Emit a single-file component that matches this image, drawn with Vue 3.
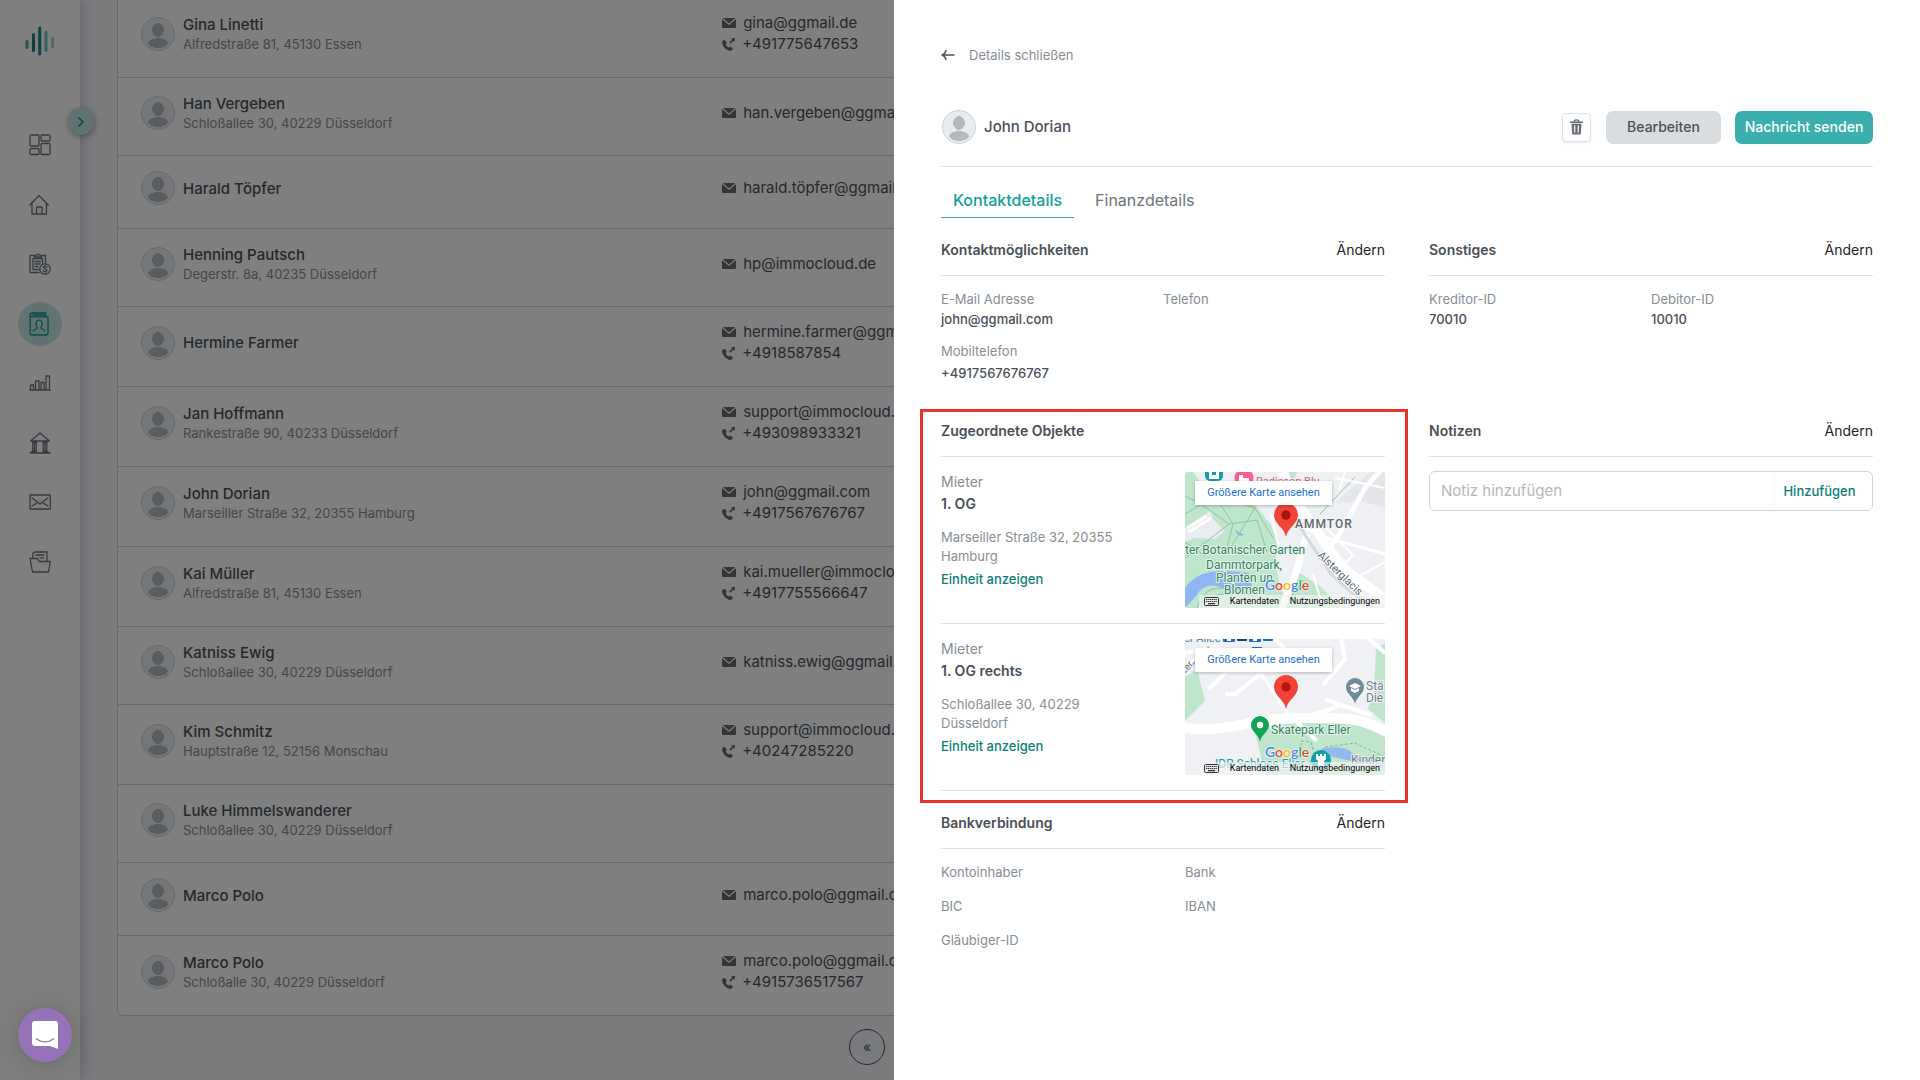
<script setup>
const contacts = [
  { name: 'Gina Linetti', address: 'Alfredstraße 81, 45130 Essen', mail: 'gina@ggmail.de', phone: '+491775647653' },
  { name: 'Han Vergeben', address: 'Schloßallee 30, 40229 Düsseldorf', mail: 'han.vergeben@ggmail.de' },
  { name: 'Harald Töpfer', mail: 'harald.töpfer@ggmail.de' },
  { name: 'Henning Pautsch', address: 'Degerstr. 8a, 40235 Düsseldorf', mail: 'hp@immocloud.de' },
  { name: 'Hermine Farmer', mail: 'hermine.farmer@ggmail.de', phone: '+4918587854' },
  { name: 'Jan Hoffmann', address: 'Rankestraße 90, 40233 Düsseldorf', mail: 'support@immocloud.de', phone: '+493098933321' },
  { name: 'John Dorian', address: 'Marseiller Straße 32, 20355 Hamburg', mail: 'john@ggmail.com', phone: '+4917567676767' },
  { name: 'Kai Müller', address: 'Alfredstraße 81, 45130 Essen', mail: 'kai.mueller@immocloud.de', phone: '+4917755566647' },
  { name: 'Katniss Ewig', address: 'Schloßallee 30, 40229 Düsseldorf', mail: 'katniss.ewig@ggmail.de' },
  { name: 'Kim Schmitz', address: 'Hauptstraße 12, 52156 Monschau', mail: 'support@immocloud.de', phone: '+40247285220' },
  { name: 'Luke Himmelswanderer', address: 'Schloßallee 30, 40229 Düsseldorf' },
  { name: 'Marco Polo', mail: 'marco.polo@ggmail.com' },
  { name: 'Marco Polo', address: 'Schloßalle 30, 40229 Düsseldorf', mail: 'marco.polo@ggmail.de', phone: '+4915736517567' },
]

const navItems = ['dashboard', 'home', 'billing', 'contacts', 'chart', 'bank', 'mail', 'folder']

const objects = [
  { role: 'Mieter', unit: '1. OG', address: 'Marseiller Straße 32, 20355 Hamburg', map: 'hamburg' },
  { role: 'Mieter', unit: '1. OG rechts', address: 'Schloßallee 30, 40229 Düsseldorf', map: 'duesseldorf' },
]
</script>

<template>
  <div class="app">
    <aside class="sidebar">
      <svg class="logo" width="30" height="30" viewBox="0 0 30 30" fill="none" stroke-width="3" stroke-linecap="round">
        <path d="M2 15.500v6" stroke="#46aaa6" />
        <path d="M8.500 8.500v16" stroke="#237f7b" />
        <path d="M14.700 2v26" stroke="#1c8883" />
        <path d="M21 6v18.500" stroke="#7cc4c1" />
        <path d="M27.700 12.500v8" stroke="#90d0cd" />
      </svg>
      <nav class="nav" aria-label="Navigation">
        <a v-for="item in navItems" :key="item" href="#" class="nav-link" :class="{ active: item === 'contacts' }" :aria-label="item">
          <svg width="22" height="24" viewBox="0 0 22 24" fill="none" stroke="currentColor" stroke-width="1.300" stroke-linejoin="round" stroke-linecap="round">
            <g v-if="item === 'dashboard'">
              <rect x="1" y="2" width="9" height="11" rx="1" /><rect x="12" y="2" width="9" height="6" rx="1" />
              <rect x="1" y="15.500" width="9" height="6" rx="1" /><rect x="12" y="10.500" width="9" height="11" rx="1" />
            </g>
            <g v-else-if="item === 'home'">
              <path d="M.8 12 10 2.500l9.300 9.500M3 10v11h14.500V10M7.500 21v-7h5.500v7" />
            </g>
            <g v-else-if="item === 'billing'">
              <path d="M10 20.500H1V3.500h4.500M12 3.500h4.500v8M5.500 5V3.500h1.700a2 2 0 0 1 3.600 0h1.700V5z" />
              <path d="M10 17.500H4V6.500h9.500v5M6 9.500h5.500M6 12h5M6 14.500h3" />
              <circle cx="16" cy="17" r="5.200" />
              <path d="M18 15.200c-.6-1.200-3.600-1.200-3.600.3 0 1.600 3.500 1.200 3.500 2.900 0 1.500-3 1.500-3.700.2M16.200 13.500v1M16.200 19.700v1" />
            </g>
            <g v-else-if="item === 'contacts'">
              <path d="M1.200 3.500A2.300 2.300 0 0 1 3.500 1h13v3M1.200 3.500V21A2 2 0 0 0 3.200 23H17a2 2 0 0 0 2-2V4.800H3.500A2 2 0 0 1 1.200 3M4 3h12" />
              <path d="M4.500 19c.5-2 3-1.500 3.700-2.800.3-1-.9-1.500-1.200-4 0-5.500 6.200-5.500 6.200 0-.2 2.500-1.500 3-1.200 4 .7 1.300 3.200.8 3.700 2.800" />
            </g>
            <g v-else-if="item === 'chart'">
              <path d="M.8 19h20.500M1.500 19v-5h3v5M6.500 19v-9h3.500v9M12 19v-7.500h3V19M17 19V5h3.500v14" />
            </g>
            <g v-else-if="item === 'bank'">
              <path d="M1.500 10 11 2l9.500 8zM.8 22h20.500M2.500 20.500h5M14 20.500h5M3.500 11.500h4M14 11.500h4M3.800 11.500v9M5.500 11.500v9M7.200 11.500v9M14.300 11.500v9M16 11.500v9M17.800 11.500v9" />
            </g>
            <g v-else-if="item === 'mail'">
              <rect x="1" y="5" width="20.300" height="14" />
              <path d="m3 8 8 6 8-6M3 16l4.500-2.800M19 16l-4.500-2.800" />
            </g>
            <g v-else>
              <path d="M1 8.500h7.500l1.500 3h11.200L19.500 22h-16zM3.800 8.500V3.500L5.500 2H18v9.500M7 5h8M11 7.800h4" />
            </g>
          </svg>
        </a>
      </nav>
      <button class="expand" type="button" aria-label="Menü ausklappen">
        <svg width="8" height="12" viewBox="0 0 8 12" fill="none" stroke="currentColor" stroke-width="1.600" stroke-linecap="round" stroke-linejoin="round"><path d="m2 2 4 4-4 4" /></svg>
      </button>
    </aside>

    <main class="main">
      <div class="card">
        <table class="contacts">
          <colgroup><col class="col-name" /><col /></colgroup>
          <tbody>
            <tr v-for="(c, i) in contacts" :key="i">
              <td>
                <div class="person">
                  <span class="avatar"></span>
                  <div>
                    <div class="name">{{ c.name }}</div>
                    <div v-if="c.address" class="address">{{ c.address }}</div>
                  </div>
                </div>
              </td>
              <td>
                <div v-if="c.mail" class="contact-line">
                  <svg width="14" height="10" viewBox="0 0 14 10" fill="currentColor"><path d="M.8 0h12.400L7 5.600zM0 .9 7 7.100l7-6.200V9a1 1 0 0 1-1 1H1a1 1 0 0 1-1-1z" /></svg>
                  <span>{{ c.mail }}</span>
                </div>
                <div v-if="c.phone" class="contact-line phone-line">
                  <svg width="13" height="13" viewBox="0 0 13 13" fill="currentColor"><path d="M0 3.200 2.600 1.700 5 4.800 3.700 6.200c.6 1.600 1.700 2.600 3 3.300l1.400-1 2.900 2.100-1.500 2.200C4.500 13.300.2 8.500 0 3.200z" /><path d="M9 .3 13 0l-.3 4-1.300-1.200-3 3-1.200-1.200 3-3z" /></svg>
                  <span>{{ c.phone }}</span>
                </div>
              </td>
            </tr>
          </tbody>
        </table>
      </div>
      <div class="pager"><button type="button" class="page-btn">«</button></div>
    </main>

    <div class="backdrop"></div>

    <section class="drawer">
      <a href="#" class="close">
        <svg width="14" height="12" viewBox="0 0 14 12" fill="none" stroke="#495057" stroke-width="1.400" stroke-linecap="round" stroke-linejoin="round"><path d="M13 6H1M5 1.500C4.500 3.800 3 5.300 1 6c2 .7 3.500 2.200 4 4.500" /></svg>
        <span>Details schließen</span>
      </a>

      <header class="drawer-head">
        <span class="avatar"></span>
        <h1>John Dorian</h1>
        <button type="button" class="trash" aria-label="Löschen">
          <svg width="13" height="16" viewBox="0 0 13 16" fill="#666e76"><path d="M0 2.500h13v1.400H0zM3.500 2.500a3 2.300 0 0 1 6 0h-1.400a1.600 1 0 0 0-3.200 0z" /><path fill-rule="evenodd" d="M1.500 4.800h10l-.7 10.700H2.200zM4 6.500l.3 7.300h1V6.500zm3.700 0v7.300h1L9 6.500z" /></svg>
        </button>
        <button type="button" class="btn btn-grey">Bearbeiten</button>
        <button type="button" class="btn btn-teal">Nachricht senden</button>
      </header>

      <nav class="tabs">
        <a href="#" class="tab active">Kontaktdetails</a>
        <a href="#" class="tab">Finanzdetails</a>
      </nav>

      <div class="sections">
        <section>
          <div class="section-head"><h2>Kontaktmöglichkeiten</h2><button type="button" class="edit">Ändern</button></div>
          <dl class="fields">
            <div><dt>E-Mail Adresse</dt><dd>john@ggmail.com</dd></div>
            <div><dt>Telefon</dt></div>
            <div><dt>Mobiltelefon</dt><dd class="phone-value">+4917567676767</dd></div>
          </dl>
        </section>

        <section>
          <div class="section-head"><h2>Sonstiges</h2><button type="button" class="edit">Ändern</button></div>
          <dl class="fields">
            <div><dt>Kreditor-ID</dt><dd>70010</dd></div>
            <div><dt>Debitor-ID</dt><dd>10010</dd></div>
          </dl>
        </section>

        <section class="highlight">
          <div class="section-head"><h2>Zugeordnete Objekte</h2></div>
          <article v-for="o in objects" :key="o.map" class="object">
            <div class="object-info">
              <div class="role">{{ o.role }}</div>
              <div class="unit">{{ o.unit }}</div>
              <p>{{ o.address }}</p>
              <a href="#">Einheit anzeigen</a>
            </div>
            <div class="map">
              <svg v-if="o.map === 'hamburg'" viewBox="0 0 200 136" preserveAspectRatio="xMidYMid slice">
                <rect width="200" height="136" fill="#eff0f3" />
                <path d="M0 0h8l18 24 44 9 16 20 7 20-3 20 12 43H0zM96 0h16l-3 8H95z" fill="#bfe5cd" />
                <path d="m112 99 24 16 20 21h-56z" fill="#bfe5cd" />
                <path d="m150 31 35-31h15v36l-24-7z" fill="#e4e6ea" />
                <path d="m0 56 25-17 3 8 12 12-10 8-20-1-10 4z" fill="#e9edf0" />
                <path d="M0 116c14-20 36-18 64-15l3 13-22 7c-14-12-28-8-33 2L0 136z" fill="#8fb5f2" />
                <path d="m50 58 4 2 5 3-4 1-3-2z" fill="#8fb5f2" />
                <g fill="none" stroke="#85c79f" stroke-width="1">
                  <path d="m0 42 30-18 40 12 18 30M30 24l18 28-6 24M0 86l44-34 28-4 10 32M0 24l16 8 28 20M12 136c6-20 20-24 40-16l40 10M20 136c8-16 18-16 30-10M70 36 46 75M0 70l20 14" />
                  <path d="M135 42 170 5M104 128l14-20" />
                </g>
                <g fill="none" stroke="#fff">
                  <path d="m98 0 10 26 22 30c14 20 20 32 32 43s28 18 38 30" stroke-width="10" />
                  <path d="M197-3 180 16l-28 50-14 18" stroke-width="5" />
                  <path d="m94 38 16 12 25 14 65 18" stroke-width="3" />
                  <path d="m122 62-12 42-14 34" stroke-width="7" />
                  <path d="m140 55 28 28-20 22M160 0l-6 18M150 6l50 10M128 102l10 34M86 42l8 34M164 110l36-20" stroke-width="2" />
                  <path d="m2 56 20-12M4 60l22-14" stroke-width="3" />
                </g>
                <path d="m104 36 18 30 24 36 22 20 20 14" fill="none" stroke="#d3d7df" stroke-width="3" />
                <rect x="20" y="-8" width="18" height="17" rx="5" fill="#149ea8" /><path d="M24 0h3v3h4V0h3v7H24z" fill="#fff" />
                <circle cx="59" cy="6" r="9.500" fill="#fb5c94" /><path d="M54 3h4v3h6v3H54z" fill="#fff" />
                <g class="map-text" font-size="12" fill="#31825e" stroke="#e6f5ec" stroke-width="2">
                  <text x="71" y="13" font-size="11" fill="#e5528e">Radisson Blu</text>
                  <text x="0" y="82">ter Botanischer Garten</text>
                  <text x="21" y="97">Dammtorpark,</text>
                  <text x="31" y="110">Planten un</text>
                  <text x="39" y="122">Blomen</text>
                  <text x="110" y="56" fill="#60666d" stroke="#f4f5f7" class="district">AMMTOR</text>
                  <text transform="translate(132 84) rotate(44)" font-size="11" fill="#60666d" stroke="#fff">Alsterglacis</text>
                </g>
                <path d="M101 65c-2-10-12-13-12-22a12 12 0 0 1 24 0c0 9-10 12-12 22z" fill="#f04438" /><circle cx="101" cy="43" r="4.700" fill="#a8140f" />
              </svg>
              <svg v-else viewBox="0 0 200 136" preserveAspectRatio="xMidYMid slice">
                <rect width="200" height="136" fill="#eff1f4" />
                <path d="m0 38 12-8 8 32-20 20zM191 10l9-6v80l-17-14 6-18zM70 92l38-8 60-4 32 14v42H80z" fill="#bfe5cd" />
                <g fill="none" stroke="#fff">
                  <path d="M-5 88c20 4 40 3 65-3s40-6 75-6 45 2 70 16" stroke-width="10" />
                  <path d="M76 34 104 76l28 26M24 50l18-18 50 0M40 55h10l28-22M0 14l30-6 40 14M90 0l12 12M156-2l4 22-22 26M182-2l18 16M140 60l16 6 30 10M110 80l30-8 16-6M0 30l20-20" stroke-width="4" />
                </g>
                <path d="m0 34 24-26" fill="none" stroke="#8fb1ee" stroke-width="2" />
                <path d="m122 125 16-16c16-2 26 0 30 6l30 6v8l-36-8-18-4-16 10z" fill="#95b8f0" />
                <path d="M116 112v-10l10 1 6 22M140 108l30-4 30 14" fill="none" stroke="#85b79a" stroke-width="1" stroke-dasharray="3 2" />
                <g fill="#2269c4"><rect x="38" y="-5" width="12" height="8" rx="1" /><rect x="52" y="-5" width="10" height="7" rx="1" fill="#1b3c84" /><rect x="64" y="-5" width="12" height="8" rx="1" /><rect x="78" y="-5" width="10" height="7" rx="1" /><rect x="67" y="8" width="10" height="4" /></g>
                <g fill="#fff"><path d="M42 0h4v2h-4zM68 0h4v2h-4z" /></g>
                <circle cx="136" cy="121" r="10" fill="#149ea8" /><path d="M131 115h2v2h2v-2h2v2h2v-2h2v5l-2 2v5h-6v-5l-2-2z" fill="#fff" />
                <g class="map-text" font-size="12" fill="#31825e" stroke="#e6f5ec" stroke-width="2">
                  <text x="-1" y="3" font-size="11" fill="#5b78b5">er Allee</text>
                  <text x="86" y="95">Skatepark Eller</text>
                  <text x="30" y="129" fill="#2696a5">IDR Schloss Eller</text>
                  <text x="166" y="125" fill="#71808b">Kinder</text>
                  <text x="181" y="51" fill="#6f7e8a" stroke="#f4f5f7">Stä</text>
                  <text x="181" y="63" fill="#6f7e8a" stroke="#f4f5f7">Die</text>
                  <text transform="translate(3 32) rotate(-50)" font-size="10" fill="#666" stroke="#fff">er</text>
                </g>
                <path d="M170 65c-1-7-9-10-9-17a9 9 0 0 1 18 0c0 7-8 10-9 17z" fill="#718a98" /><path d="m164 47 6-3 6 3-6 3zM166 49v3l4 2 4-2v-3l-4 2z" fill="#fff" />
                <path d="M75 103c-1-8-9-10-9-17a9 9 0 0 1 18 0c0 7-8 9-9 17z" fill="#12a455" /><circle cx="75" cy="86" r="3.200" fill="#fff" />
                <path d="M101 70c-2-10-12-13-12-22a12 12 0 0 1 24 0c0 9-10 12-12 22z" fill="#f04438" /><circle cx="101" cy="48" r="4.700" fill="#b9140f" />
              </svg>
              <a href="#" class="map-link">Größere Karte ansehen</a>
              <span class="google"><b class="g-blue">G</b><b class="g-red">o</b><b class="g-yellow">o</b><b class="g-blue">g</b><b class="g-green">l</b><b class="g-red">e</b></span>
              <div class="map-foot">
                <svg width="15" height="9" viewBox="0 0 15 9"><rect x=".5" y=".5" width="14" height="8" rx="1" fill="#e8e8e8" stroke="#333" /><path d="M2 2.500h11M2 4.500h11" stroke="#333" stroke-width="1.200" stroke-dasharray="1.300 .6" /><path d="M4 6.700h7" stroke="#333" stroke-width="1.200" /></svg>
                <span>Kartendaten</span><a href="#">Nutzungsbedingungen</a>
              </div>
            </div>
          </article>
        </section>

        <section>
          <div class="section-head"><h2>Notizen</h2><button type="button" class="edit">Ändern</button></div>
          <form class="note" @submit.prevent>
            <input type="text" placeholder="Notiz hinzufügen" aria-label="Notiz hinzufügen" />
            <button type="submit">Hinzufügen</button>
          </form>
        </section>

        <section>
          <div class="section-head"><h2>Bankverbindung</h2><button type="button" class="edit">Ändern</button></div>
          <dl class="fields bank">
            <div><dt>Kontoinhaber</dt></div>
            <div><dt>Bank</dt></div>
            <div><dt>BIC</dt></div>
            <div><dt>IBAN</dt></div>
            <div><dt>Gläubiger-ID</dt></div>
          </dl>
        </section>
      </div>
    </section>

    <button type="button" class="chat" aria-label="Chat öffnen">
      <svg width="26" height="28" viewBox="0 0 26 28"><path d="M3 0h20a3 3 0 0 1 3 3v25l-8-3H3a3 3 0 0 1-3-3V3a3 3 0 0 1 3-3z" fill="#fff" /><path d="M4.500 18c5 3.800 12 3.800 17 0" fill="none" stroke="#9673b8" stroke-width="1.400" stroke-linecap="round" /></svg>
    </button>
  </div>
</template>

<style>
body {
  margin: 0;
}
</style>

<style scoped>
.app {
  display: flex;
  height: 100vh;
  overflow: hidden;
  position: relative;
  background: #f5f6fb;
  color: #495057;
  font-family: Inter, 'Liberation Sans', sans-serif;
  font-size: 14px;
  line-height: 20px;
}
.app *,
.app *::after {
  box-sizing: border-box;
}
h1,
h2,
p,
dl,
dd {
  margin: 0;
}
a {
  text-decoration: none;
  color: inherit;
}
button {
  font: inherit;
  color: inherit;
  border: 0;
  padding: 0;
  background: none;
  cursor: pointer;
}
svg {
  display: block;
  flex: none;
}

.sidebar {
  position: relative;
  flex: none;
  width: 80px;
  padding-top: 26px;
  display: flex;
  flex-direction: column;
  align-items: center;
  background: #fff;
  box-shadow: 2px 0 12px rgba(40, 60, 80, 0.22);
}
.nav {
  margin-top: 67px;
  height: 461px;
  display: flex;
  flex-direction: column;
  justify-content: space-between;
}
.nav-link {
  width: 44px;
  height: 44px;
  border-radius: 50%;
  display: flex;
  align-items: center;
  justify-content: center;
  color: #6c757d;
}
.nav-link.active {
  background: #c0e4e5;
  color: #0b9a93;
}
.expand {
  position: absolute;
  top: 108px;
  right: -14px;
  width: 27px;
  height: 27px;
  border-radius: 50%;
  display: flex;
  align-items: center;
  justify-content: center;
  background: #c0e4e5;
  color: #0b8f88;
  box-shadow: 1px 2px 6px rgba(0, 0, 0, 0.3);
}

.main {
  flex: 1;
  min-width: 0;
  padding: 0 37px;
}
.card {
  margin-top: -2px;
  background: #fff;
  border: 1px solid #ced4da;
  border-top: 0;
  border-radius: 0 0 6px 6px;
}
.contacts {
  width: 100%;
  table-layout: fixed;
  border-spacing: 0;
}
.col-name {
  width: 34.25%;
}
.contacts td {
  padding: 15px 0 23px;
  border-bottom: 1px solid #ced4da;
}
.contacts tr:last-child td {
  border-bottom: 0;
}
.person {
  display: flex;
  align-items: center;
  gap: 8px;
  padding-left: 23px;
}
.avatar {
  flex: none;
  width: 34px;
  height: 34px;
  border: 1px solid #ced4da;
  border-radius: 50%;
  background:
    radial-gradient(ellipse 6px 7px at 16px 12px, #b5babf 95%, transparent),
    radial-gradient(ellipse 10px 5px at 16px 25px, #b5babf 95%, transparent),
    #e9ecef;
}
.name {
  font-weight: 500;
  font-size: 15px;
  line-height: 21px;
}
.address {
  font-size: 13px;
  line-height: 18px;
  color: #868e96;
}
.contact-line {
  display: flex;
  align-items: center;
  gap: 7px;
  font-size: 15px;
  white-space: nowrap;
}
.contact-line svg {
  color: #666c72;
}
.phone-line {
  margin-top: 1px;
}
.pager {
  width: 302px;
  margin: 13px auto 0;
  display: flex;
}
.page-btn {
  width: 36px;
  height: 36px;
  border: 1px solid #495057;
  border-radius: 50%;
  font-size: 14px;
}

.backdrop {
  position: absolute;
  inset: 0;
  background: rgba(0, 0, 0, 0.5);
}

.drawer {
  position: absolute;
  top: 0;
  right: 0;
  bottom: 0;
  width: 53.4375%;
  padding: 45px 47px 0;
  background: #fff;
}
.close {
  display: flex;
  align-items: center;
  gap: 14px;
  font-size: 13px;
  color: #868e96;
}
.drawer-head {
  display: flex;
  align-items: center;
  margin-top: 45px;
  padding: 0 0 22px 1px;
  border-bottom: 1px solid #dee2e6;
}
.drawer-head h1 {
  flex: 1;
  margin-left: 8px;
  font-size: 15px;
  font-weight: 500;
}
.trash {
  width: 29px;
  height: 29px;
  display: flex;
  align-items: center;
  justify-content: center;
  border: 1px solid #dee2e6;
  border-radius: 4px;
  box-shadow: 0 1px 2px rgba(0, 0, 0, 0.08);
}
.btn {
  height: 33px;
  border-radius: 7px;
  font-weight: 500;
}
.btn-grey {
  width: 115px;
  margin-left: 15px;
  background: #d9dde0;
}
.btn-teal {
  width: 138px;
  margin-left: 14px;
  background: #3aafad;
  color: #fff;
}
.tabs {
  display: flex;
  gap: 9px;
  padding: 16px 0 8px;
}
.tab {
  height: 35px;
  padding: 0 12px;
  font-size: 16px;
  line-height: 34px;
  color: #6c757d;
}
.tab.active {
  font-weight: 500;
  color: #12a19c;
  border-bottom: 1px solid #3aa6a4;
}

.sections {
  display: grid;
  grid-template-columns: 1fr 1fr;
  column-gap: 44px;
}
.section-head {
  display: flex;
  justify-content: space-between;
  padding: 14px 0 15px;
  border-bottom: 1px solid #dee2e6;
}
.section-head h2 {
  font-size: 14px;
  font-weight: 600;
}
.edit {
  color: #212529;
  font-size: 14px;
}
.fields {
  display: grid;
  grid-template-columns: 1fr 1fr;
  row-gap: 12px;
  padding: 13px 0 22px;
  font-size: 13px;
}
.fields dt {
  color: #868e96;
}
.fields dd {
  font-weight: 500;
}
.fields .phone-value {
  line-height: 24px;
}
.fields.bank {
  column-gap: 44px;
  row-gap: 14px;
}

.highlight {
  position: relative;
  padding-bottom: 8px;
}
.highlight::after {
  content: '';
  position: absolute;
  inset: 2px -23px -4px -21px;
  border: 3px solid #e6352f;
  pointer-events: none;
}
.object {
  display: grid;
  grid-template-columns: 1fr 1fr;
  column-gap: 44px;
  padding: 15px 0;
  border-bottom: 1px solid #dee2e6;
}
.object-info {
  font-size: 13px;
}
.role {
  font-size: 14px;
  color: #868e96;
}
.unit {
  margin-top: 2px;
  font-size: 14px;
  font-weight: 600;
}
.object-info p {
  margin: 14px 0 3px;
  line-height: 19px;
  color: #868e96;
}
.object-info a {
  font-weight: 500;
  color: #0b7f77;
}
.map {
  position: relative;
  height: 136px;
  overflow: hidden;
  border-radius: 3px;
  font-family: Roboto, sans-serif;
}
.map > svg {
  width: 100%;
  height: 100%;
}
.map-text {
  paint-order: stroke;
  stroke-linejoin: round;
}
.district {
  letter-spacing: 1px;
  font-weight: 500;
}
.map-link {
  position: absolute;
  top: 9px;
  left: 10px;
  width: 137px;
  height: 24px;
  background: #fff;
  box-shadow: 0 1px 3px rgba(0, 0, 0, 0.25);
  color: #1a6fd0;
  font-size: 11px;
  line-height: 23px;
  text-align: center;
}
.google {
  position: absolute;
  left: 80px;
  top: 104px;
  font-family: Lato, sans-serif;
  font-size: 14px;
  line-height: 18px;
  text-shadow: 0 0 2px #fff, 0 0 2px #fff;
}
.google b {
  font-weight: 600;
}
.g-blue {
  color: #4285f4;
}
.g-red {
  color: #ea4335;
}
.g-yellow {
  color: #fbbc05;
}
.g-green {
  color: #34a853;
}
.map-foot {
  position: absolute;
  left: 14px;
  right: 0;
  bottom: 0;
  height: 13px;
  padding: 0 5px 0 5px;
  display: flex;
  align-items: center;
  justify-content: space-between;
  background: rgba(245, 245, 245, 0.65);
  color: #000;
  font-size: 9px;
  line-height: 13px;
}

.note {
  display: flex;
  height: 40px;
  margin-top: 14px;
  border: 1px solid #ced4da;
  border-radius: 6px;
  overflow: hidden;
}
.note input {
  flex: 1;
  min-width: 0;
  border: 0;
  border-right: 1px solid #f8f9fa;
  padding: 0 11px;
  font: inherit;
  font-size: 15px;
  color: #495057;
  background: transparent;
}
.note input::placeholder {
  color: #b5b8bb;
}
.note button {
  width: 97px;
  padding-right: 8px;
  font-size: 13px;
  font-weight: 500;
  color: #0b7f77;
}

.chat {
  position: absolute;
  left: 18px;
  bottom: 18px;
  width: 54px;
  height: 54px;
  border-radius: 50%;
  display: flex;
  align-items: center;
  justify-content: center;
  background: #9673b8;
  box-shadow: 0 1px 6px rgba(0, 0, 0, 0.06), 0 2px 32px rgba(0, 0, 0, 0.16);
}
</style>
